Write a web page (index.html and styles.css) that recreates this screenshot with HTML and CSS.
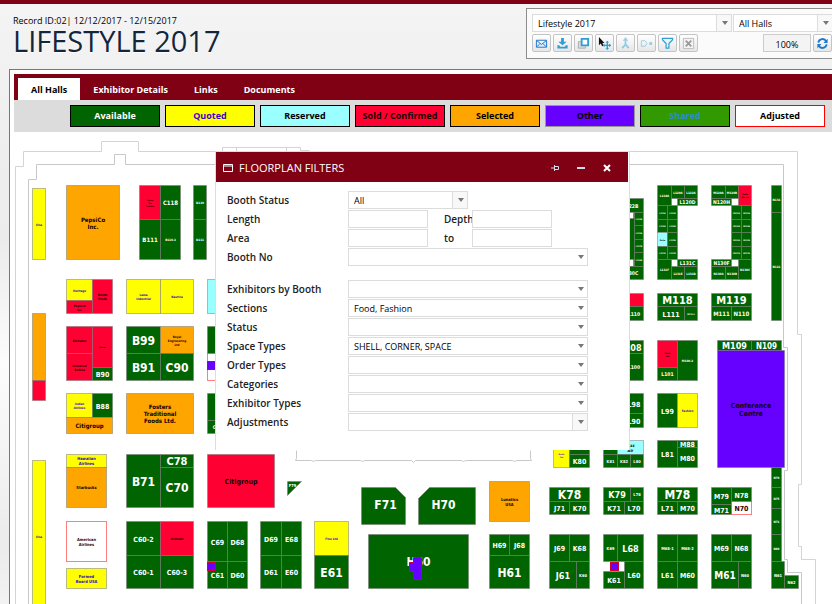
FILE: index.html
```html
<!DOCTYPE html>
<html lang="en">
<head>
<meta charset="utf-8">
<title>Lifestyle 2017</title>
<link rel="stylesheet" href="styles.css">
</head>
<body>
<header class="top">
  <div class="heading">
    <div class="record">Record ID:02| 12/12/2017 - 12/15/2017</div>
    <h1>LIFESTYLE 2017</h1>
  </div>
  <div class="tools">
    <div class="tool-row">
      <div class="combo split wide"><select aria-label="Event"><option>Lifestyle 2017</option></select></div>
      <div class="combo split"><select aria-label="Hall"><option>All Halls</option></select></div>
    </div>
    <div class="tool-row">
      <button class="icon" aria-label="Mail"><svg viewBox="0 0 14 14"><path d="M1.500 3.500h11v7.500h-11zM2 4l5 4 5-4M2 10.500l3.500-3.500M12 10.500l-3.500-3.500" fill="#dcefff" stroke="#1870c8"/></svg></button>
      <button class="icon" aria-label="Download"><svg viewBox="0 0 14 14"><path d="M5.500 1h3v4h3L7 9 2.500 5h3zM1.500 9h2l1 1.500h5l1-1.500h2v3.500h-11z" fill="#2d9fd2"/></svg></button>
      <button class="icon" aria-label="Copy"><svg viewBox="0 0 14 14"><path d="M4 5H1.500v7H9v-2" fill="#ddd" stroke="#aaa"/><path d="M5 2h7v7H5z" fill="#fff" stroke="#2d9fd2" stroke-width="2"/></svg></button>
      <button class="icon" aria-label="Move"><svg viewBox="0 0 14 14"><path d="M1 0v9l2-2 1.500 3 1.500-.7L4.700 6.500H7z" fill="#111"/><path d="M10 5v8M6 9h8" stroke="#2d9fd2" stroke-width="1.500"/><path d="M10 4l2 2H8zM10 14l2-2H8zM5 9l2-2v4zM14 9l-2-2v4z" fill="#2d9fd2"/></svg></button>
      <button class="icon faded" aria-label="Merge"><svg viewBox="0 0 14 14"><path d="M7 3v5L3.500 12M7 8l3.500 4" fill="none" stroke="#2d9fd2" stroke-width="2"/><path d="M7 0l3 4H4z" fill="#2d9fd2"/></svg></button>
      <button class="icon faded" aria-label="Split"><svg viewBox="0 0 14 14"><path d="M1.500 4h4l2 3-2 3h-4z" fill="none" stroke="#2d9fd2"/><path d="M10 5.500h3v3h-3z" fill="#2d9fd2"/></svg></button>
      <button class="icon" aria-label="Filter"><svg viewBox="0 0 14 14"><path d="M1.500 1.500h11v1.500L8.500 7v5h-3V7l-4-4z" fill="#e8f6fc" stroke="#2d9fd2" stroke-width="1.300"/></svg></button>
      <button class="icon" aria-label="Clear"><svg viewBox="0 0 14 14"><path d="M1.500 1.500h11v11h-11z" fill="#f4f4f4" stroke="#bbb"/><path d="M4 4l6 6M10 4l-6 6" stroke="#999" stroke-width="2"/></svg></button>
      <input class="zoom" aria-label="Zoom" value="100%">
      <button class="icon" aria-label="Refresh"><svg viewBox="0 0 14 14"><path d="M2.500 6A4.600 4.600 0 0 1 11 4.500M11.500 8A4.600 4.600 0 0 1 3 9.500" fill="none" stroke="#1f78c8" stroke-width="2"/><path d="M12.500 2v4.500H8zM1.500 12V7.500H6z" fill="#1f78c8"/></svg></button>
    </div>
  </div>
</header>
<main class="panel">
  <nav class="tabs">
    <a class="current" href="#halls">All Halls</a>
    <a href="#details">Exhibitor Details</a>
    <a href="#links">Links</a>
    <a href="#documents">Documents</a>
  </nav>
  <div class="legend">
    <button class="lg available">Available</button>
    <button class="lg quoted">Quoted</button>
    <button class="lg reserved">Reserved</button>
    <button class="lg sold">Sold / Confirmed</button>
    <button class="lg selected">Selected</button>
    <button class="lg other">Other</button>
    <button class="lg shared">Shared</button>
    <button class="lg adjusted">Adjusted</button>
  </div>
  <svg class="plan" id="plan" viewBox="14 132 818 472" role="img" aria-label="Floor plan">
    <g class="walls" transform="translate(.5 .5)">
      <path class="outer" d="M15 604V166H23V151H101V141H138V151H222V147H300V150H309M236 147V151M286 147V151M600 151H797V334H801V484H798V546H801V559H815V604"/>
      <path d="M28 604V179H36V164H114V154H125V164H215M629 164H783V347H787V470H784V559H787V572H801V604"/>
      <path d="M296 450V458L295 460H311L313 461L315 460H360L362 461L364 460H411L413 462L415 460H461L463 461L465 460H512L514 461L516 460H531L530 458V450"/>
    </g>
    <g id="booths"></g>
  </svg>
</main>
<section class="dialog" aria-label="Floorplan filters">
  <div class="bar">
    <svg class="win" viewBox="0 0 10 10"><path d="M.5 1.500h9v7h-9zM.5 3h9" fill="none" stroke="#fff"/></svg>
    <h2>FLOORPLAN FILTERS</h2>
    <button aria-label="Pin"><svg viewBox="0 0 10 10"><path d="M1 5h3M4.500 2v6M4.500 3.500h4v3h-4" fill="none" stroke="#d5dbe8"/></svg></button>
    <button aria-label="Minimize"><svg viewBox="0 0 10 10"><path d="M1 5h8" stroke="#d5dbe8" stroke-width="2"/></svg></button>
    <button aria-label="Close"><svg viewBox="0 0 10 10"><path d="M2 2l6 6M8 2l-6 6" stroke="#fff" stroke-width="2"/></svg></button>
  </div>
  <form class="filters">
    <label for="f1">Booth Status</label>
    <div class="combo split short"><select id="f1"><option>All</option></select></div>
    <label for="f2">Length</label>
    <div class="pair"><input id="f2"><label for="f3">Depth</label><input id="f3"></div>
    <label for="f4">Area</label>
    <div class="pair"><input id="f4"><label for="f5">to</label><input id="f5"></div>
    <label for="f6">Booth No</label>
    <div class="combo"><select id="f6"><option></option></select></div>
    <label class="group" for="f7">Exhibitors by Booth</label>
    <div class="combo group"><select id="f7"><option></option></select></div>
    <label for="f8">Sections</label>
    <div class="combo"><select id="f8"><option>Food, Fashion</option></select></div>
    <label for="f9">Status</label>
    <div class="combo"><select id="f9"><option></option></select></div>
    <label for="f10">Space Types</label>
    <div class="combo"><select id="f10"><option>SHELL, CORNER, SPACE</option></select></div>
    <label for="f11">Order Types</label>
    <div class="combo"><select id="f11"><option></option></select></div>
    <label for="f12">Categories</label>
    <div class="combo"><select id="f12"><option></option></select></div>
    <label for="f13">Exhibitor Types</label>
    <div class="combo"><select id="f13"><option></option></select></div>
    <label for="f14">Adjustments</label>
    <div class="combo split"><select id="f14"><option></option></select></div>
  </form>
</section>
<script src="plan.js"></script>
</body>
</html>
```
FILE: styles.css
```css
* { box-sizing: border-box; }
html, body { height: 100%; }
body {
  margin: 0;
  overflow: hidden;
  display: flex;
  flex-direction: column;
  position: relative;
  border-top: 4px solid #800014;
  background: linear-gradient(#f4f4f4, #eee 25%, #ececec 40%, #fcfcfc 60%, #f4f4f4 75%, #ebebeb 90%, #f2f2f2);
  font: 11px/14px "Open Sans", "Noto Sans", sans-serif;
  color: #000;
}
button, input, select { font: inherit; color: inherit; margin: 0; }
.top {
  display: flex;
  justify-content: space-between;
  height: 65px;
  padding: 4px 0 6px 13px;
}
.heading { padding-top: 7px; }
.record { font-size: 9px; line-height: 12px; }
h1 {
  margin: 0;
  font: 500 29px/28px "Open Sans", "Noto Sans", sans-serif;
  color: #14263c;
  text-shadow: 0 1px 1px #fff;
}
.tools {
  flex: none;
  width: 306px;
  height: 51px;
  padding: 5px 0 0 5px;
  border: 1px solid #8c8c8c;
  border-right: 0;
  background: #fbfbfb;
}
.tool-row { display: flex; gap: 1px; height: 18px; margin-bottom: 2px; }
.tool-row + .tool-row { height: 19px; gap: 2px; }
.combo {
  position: relative;
  width: 240px;
  height: 18px;
}
.combo select {
  appearance: none;
  display: block;
  width: 100%;
  height: 100%;
  padding: 2px 16px 0 5px;
  border: 1px solid #dcdcdc;
  border-radius: 0;
  background: #fff;
  font: 9px/14px "Open Sans", sans-serif;
}
.combo::after {
  content: "";
  position: absolute;
  top: 7px;
  right: 4px;
  border: 3px solid transparent;
  border-top: 4px solid #777;
  border-bottom: 0;
}
.split::before {
  content: "";
  position: absolute;
  top: 1px;
  right: 1px;
  bottom: 1px;
  width: 14px;
  border-left: 1px solid #dcdcdc;
  background: #f8f8f8;
}
.tool-row .combo { flex: none; width: 100px; }
.tool-row .wide { width: 200px; }
.combo.short { width: 120px; }
.icon {
  flex: none;
  width: 19px;
  height: 18px;
  padding: 1px 2px;
  border: 1px solid #c4c4c4;
  border-radius: 2px;
  background: linear-gradient(#fff, #e6e6e6);
}
.icon svg { display: block; width: 13px; height: 13px; }
.faded svg { opacity: .45; }
.zoom {
  width: 48px;
  height: 18px;
  margin-left: auto;
  padding: 2px 0 0;
  border: 1px solid #ccc;
  background: #f4f4f4;
  font-size: 9px;
  text-align: center;
}
.panel {
  flex: 1;
  margin-left: 9px;
  padding: 4px 0 0 4px;
  border: solid #777;
  border-width: 1px 0 0 1px;
  background: #fff;
}
.tabs {
  display: flex;
  height: 26px;
  padding: 4px 0 0 4px;
  background: #800014;
}
.tabs a {
  padding: 5px 13px 0;
  color: #fff;
  font: bold 9px/14px "Open Sans", sans-serif;
  text-decoration: none;
}
.tabs .current { background: #fff; color: #000; }
.legend {
  display: flex;
  gap: 5px;
  height: 32px;
  padding: 5px 0 5px 56px;
  background: #dcdcdc;
}
.lg {
  flex: none;
  width: 90px;
  height: 22px;
  padding: 0;
  border: 1px solid #000;
  font: bold 9px/14px "Open Sans", sans-serif;
  white-space: nowrap;
}
.available { background: #006400; color: #fff; }
.quoted { background: #ff0; color: #40c; }
.reserved { background: #9ff; }
.sold { background: #ff0033; color: #200; }
.selected { background: #ffa500; }
.other { background: #60f; border-color: #999; }
.shared { background: #390; color: #2a8fc8; }
.adjusted { background: #fff; border-color: #f00; }
.plan { display: block; width: 818px; height: 472px; }
.walls path { fill: none; stroke: #c8c8c8; }
.walls .outer { stroke: #d4d4d4; }
.plan rect, .plan polygon {
  stroke: #777;
  stroke-opacity: .5;
}
.plan text {
  font-family: "DejaVu Sans Condensed", "DejaVu Sans", sans-serif;
  font-weight: bold;
  text-anchor: middle;
}
.g { fill: #006400; }
.y { fill: #ff0; }
.r { fill: #ff0033; }
.o { fill: #ffa500; }
.c { fill: #9ff; }
.p { fill: #60f; }
.w, .a { fill: #fff; }
.plan rect.a { stroke: #f00; }
.plan .pr { fill: #60f; stroke: #d00030; stroke-opacity: 1; }
text.g { fill: #fff; }
text.y { fill: #30c; }
text.r, text.o, text.c, text.p { fill: #100; }
text.a { fill: #300; }
.dialog {
  position: absolute;
  top: 147px;
  left: 215px;
  width: 415px;
  padding-bottom: 19px;
  border: solid #ddd;
  border-width: 1px 1px 0;
  background: #fff;
}
.bar {
  display: flex;
  align-items: center;
  height: 30px;
  margin-right: 1px;
  padding: 2px 16px 0 7px;
  background: #800014;
  color: #fff;
}
.bar svg { display: block; width: 10px; height: 10px; }
.bar h2 {
  flex: 1;
  margin: 0 0 0 6px;
  font: 11px/14px "Open Sans", sans-serif;
}
.bar button {
  width: 10px;
  margin-left: 16px;
  padding: 0;
  border: 0;
  background: none;
}
.filters {
  display: grid;
  grid-template-columns: 121px 240px;
  row-gap: 1px;
  padding: 9px 0 0 11px;
}
.filters label {
  height: 18px;
  font: 600 10px/18px "Open Sans", sans-serif;
  color: #222;
}
.filters .group { margin-top: 13px; }
.pair { display: flex; }
.pair input {
  width: 80px;
  height: 18px;
  border: 1px solid #dcdcdc;
  background: #fff;
}
.filters .pair label { width: 44px; padding-left: 16px; }
```
FILE: plan.js
```js
// Each booth: kind, left, top, right, bottom, label, label size.
// Kinds: g available, y quoted, r sold, o selected, c reserved, p other, a adjusted, w void.
const booths = [
  ["y",32,188,45,259,"Visa",3],["o",66,185,119,259,"PepsiCo|Inc.",6],
  ["r",139,185,160,219,"Lipton|Tea|Limited",2],["g",160,185,180,219,"C118",6],
  ["g",139,219,160,259,"B111",6],["g",160,219,180,259,"B110-2",3],
  ["g",193,185,206,219,"D119",3],["g",193,219,206,259,"D111",3],
  ["y",66,279,92,300,"Heritage",3],["r",92,279,112,313,"Nestle|Foods",3],
  ["r",66,300,92,313,"Pepsico|Inc.",3],["y",126,279,160,313,"Lama|Industrial",3],
  ["y",160,279,193,313,"Nautica",3],["c",207,279,240,313],
  ["o",32,313,45,380],["r",32,380,45,400],
  ["r",66,326,92,353,"Emirates",3],["r",66,353,92,380,"Universal|Robina",3],
  ["r",92,326,112,367,"Airbus",2],["g",92,367,112,380,"B90",7],
  ["g",126,326,160,353,"B99",12],["o",160,326,193,353,"Royal|Engineering|Ltd",3],
  ["g",126,353,160,380,"B91",12],["g",160,353,193,380,"C90",12],
  ["g",207,326,240,353],["a",207,353,240,380],["pr",207,361,216,369],
  ["y",66,393,92,417,"Indian|Airlines",3],["g",92,393,112,417,"B88",7],
  ["o",66,417,112,433,"Citigroup",6],["o",126,393,193,433,"Fosters|Traditional|Foods Ltd.",6],
  ["g",207,393,240,420],["g",207,420,227,433,"C80",5],
  ["y",32,460,45,612,"Visa",3],["y",66,454,106,467,"Hawaiian|Airlines",4],
  ["o",66,467,106,507,"Starbucks",4],["g",126,454,160,507,"B71",12],
  ["g",160,454,193,467,"C78",11],["g",160,467,193,507,"C70",12],
  ["a",66,521,106,561,"American|Airlines",4],["y",66,568,106,588,"Formed|Board USA",4],
  ["g",126,521,160,555,"C60-2",7],["r",160,521,193,555,"Amtrade",3],
  ["g",126,555,160,588,"C60-1",7],["g",160,555,193,588,"C60-3",7],
  ["r",207,454,274,507,"Citigroup",7],
  ["g",207,521,227,561,"C69",7],["g",227,521,247,561,"D68",7],
  ["g",207,561,227,588,"C61",7],["g",227,561,247,588,"D60",7],["pr",207,562,215,570],
  ["g",260,521,281,555,"D69",7],["g",281,521,301,555,"E68",7],
  ["g",260,555,281,588,"D61",7],["g",281,555,301,588,"E60",7],
  ["y",314,521,348,555,"Fine Ltd",3],["g",314,555,348,588,"E61",12],
  ["g",368,534,468,588,"H60",12],["o",489,481,529,521,"Lunatics|USA",4],
  ["g",489,534,509,555,"H69",7],["g",509,534,529,555,"J68",7],["g",489,555,529,588,"H61",12],
  ["y",553,442,569,467,"Arctic|Cat",2],["g",569,442,589,454],["g",569,454,589,467,"K80",7],
  ["g",549,487,589,501,"K78",12],["g",549,501,569,514,"J71",7],["g",569,501,589,514,"K70",7],
  ["g",549,534,569,561,"J69",7],["g",569,534,589,561,"K68",7],
  ["g",549,561,576,588,"J61",9],["g",576,561,589,588,"K60",4],
  ["g",603,440,617,454],["c",617,440,643,454,"Jazz|Air",4],
  ["g",603,454,617,467,"K81",4],["g",617,454,630,467,"K82",4],["g",630,454,643,467,"L80",4],
  ["g",603,487,630,501,"K79",9],["g",630,487,643,501,"L78",4],
  ["g",603,501,624,514,"K71",7],["g",624,501,643,514,"L70",7],
  ["g",603,534,617,561,"K69",4],["g",617,534,643,561,"L68",9],
  ["pr",610,562,618,570],["g",603,571,624,588,"K61",7],["g",624,561,643,588,"L60",7],
  ["g",657,440,677,467,"L81",7],["g",677,440,697,447,"M88",7],["g",677,447,697,467,"M80",7],
  ["g",657,487,697,501,"M78",12],["g",657,501,677,514,"L71",7],["g",677,501,697,514,"M70",7],
  ["g",711,487,731,504,"M79",7],["g",731,487,751,501,"N78",7],
  ["g",711,504,731,514,"M71",7],["a",731,501,751,514,"N70",7],
  ["g",657,534,677,561,"M68-1",4],["g",677,534,697,561,"M68-2",4],
  ["g",657,561,677,588,"L61",7],["g",677,561,697,588,"M60",7],
  ["g",711,534,731,561,"M69",7],["g",731,534,751,561,"N68",7],
  ["g",711,561,738,588,"M61",10],["g",738,561,751,588,"N60",4],
  ["g",771,467,781,487,"N79",3],["g",771,487,781,508,"N75",3],["g",771,508,781,534,"N71",3],
  ["g",771,534,781,561,"N69",3],["g",771,561,784,588,"N61",4],["g",784,575,798,588,"N62",4],
  ["g",617,198,643,212,"L122B",5],["g",617,212,634,266],["w",617,212,633,218],["w",617,259,633,266],
  ["g",634,212,643,225,"L123B",2],["g",634,225,643,239,"L125B",2],
  ["g",634,239,643,252,"L127B",2],["g",634,252,643,266,"L129B",2],["g",617,266,643,279,"L130C",5],
  ["r",617,293,643,306],["g",624,306,643,320,"L110",5],
  ["g",617,340,643,353,"L108",9],["g",624,353,643,380,"L100",5],
  ["g",624,393,643,413,"L98",7],["g",624,413,643,427,"L90",7],
  ["g",657,185,671,205,"L118A",3],["g",671,185,684,198,"L120A",3],["g",684,185,697,198,"L122A",3],
  ["g",677,198,697,205,"L120D",5],["g",657,205,667,219,"L121A",2],["g",667,205,677,219,"L121B",2],
  ["g",657,219,667,232,"L123A",2],["g",667,219,677,232,"L123B",2],
  ["c",657,232,667,246,"Delta",2],["g",667,232,677,246,"L125B",2],
  ["g",657,246,667,259,"L127A",2],["g",667,246,677,259,"L127B",2],
  ["g",657,259,671,279,"L131F",3],["g",677,259,697,266,"L131C",5],
  ["g",671,266,684,279,"L131E",3],["g",684,266,697,279,"L131D",3],
  ["g",711,185,725,198,"M120A",3],["g",725,185,738,198,"M120B",3],
  ["r",738,185,751,205,"Delta|Marina",2],["g",711,198,731,205,"N120H",5],
  ["g",731,205,741,219,"N121A",2],["g",741,205,751,219,"N121B",2],
  ["g",731,219,741,232,"N123A",2],["g",741,219,751,232,"N123B",2],
  ["g",731,232,741,246,"N125A",2],["g",741,232,751,246,"N125B",2],
  ["g",731,246,741,259,"N127A",2],["g",741,246,751,259,"N127B",2],
  ["g",711,259,731,266,"N130F",5],["g",711,266,725,279,"N130A",3],
  ["g",725,266,738,279,"N130B",3],["g",738,259,751,279,"N130C",3],
  ["g",771,185,781,212,"N131",3],["g",771,212,781,320,"N121",3],
  ["g",657,293,697,306,"M118",11],["g",657,306,684,320,"L111",7],["g",684,306,697,320,"M110-2",2],
  ["g",711,293,751,306,"M119",11],["g",711,306,731,320,"M111",6],["g",731,306,751,320,"N110",6],
  ["r",657,340,677,367,"Globe|Ltd",2],["g",657,367,677,380,"L101",5],["g",677,340,697,380,"M100-2",3],
  ["g",717,340,751,350,"M109",9],["g",751,340,781,350,"N109",8],
  ["g",657,393,677,427,"L99",7],["y",677,393,697,427,"Fashion",3],
  ["p",717,350,784,467,"Conference|Centre",7]
];
const polygons = [
  ["g","287,481 301,481 287,495","F79",292,485,4],
  ["g","361,487 395,487 405,497 405,524 361,524","F71",385,504,12],
  ["g","418,498 429,487 475,487 475,524 418,524","H70",443,504,12],
  ["pr","413,557 421,557 421,579 413,579 413,571 409,571 409,562 413,562"]
];
const layer = document.getElementById("booths");
layer.setAttribute("transform", "translate(.5 .5)");
function add(tag, attrs, text) {
  const el = document.createElementNS("http://www.w3.org/2000/svg", tag);
  for (const name in attrs) el.setAttribute(name, attrs[name]);
  if (text) el.textContent = text;
  layer.append(el);
}
function label(kind, text, x, y, size) {
  const lines = text.split("|");
  const step = size + 1;
  lines.forEach((line, i) => add("text", {
    class: kind, x, "font-size": size,
    y: Math.round(y + size * 0.36 + (i - (lines.length - 1) / 2) * step)
  }, line));
}
for (const [kind, x, y, right, bottom, text, size] of booths) {
  add("rect", { class: kind, x, y, width: right - x, height: bottom - y });
  if (text) label(kind, text, (x + right) / 2, (y + bottom) / 2, size);
}
for (const [kind, points, text, x, y, size] of polygons) {
  add("polygon", { class: kind, points });
  if (text) label(kind, text, x, y, size);
}
```
